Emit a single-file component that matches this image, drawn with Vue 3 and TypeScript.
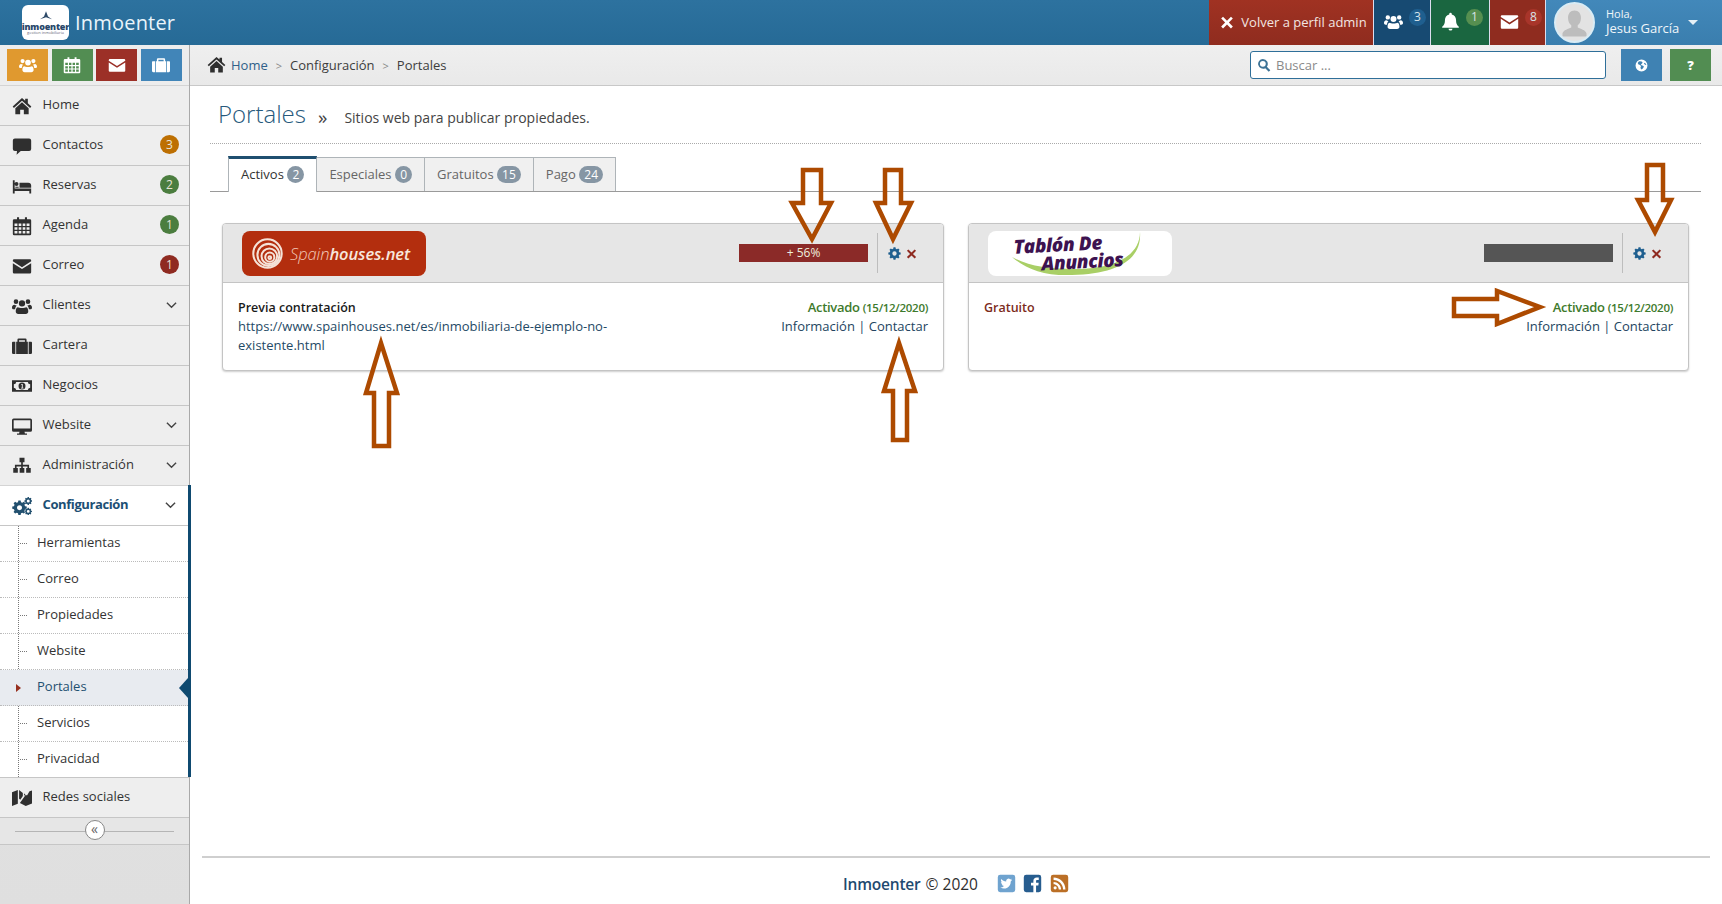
<script setup lang="ts">
function gear(cx: number, cy: number, r: number, teeth: number, hole: number) {
  const pts: string[] = []
  const step = (Math.PI * 2) / teeth
  for (let i = 0; i < teeth; i++) {
    const a = i * step
    const corners: [number, number][] = [
      [a - step * 0.34, r * 0.78],
      [a - step * 0.2, r],
      [a + step * 0.2, r],
      [a + step * 0.34, r * 0.78],
    ]
    for (const [ang, rad] of corners) {
      pts.push((cx + Math.cos(ang) * rad).toFixed(2) + ' ' + (cy + Math.sin(ang) * rad).toFixed(2))
    }
  }
  const ring = `M${cx - hole} ${cy}a${hole} ${hole} 0 1 0 ${hole * 2} 0a${hole} ${hole} 0 1 0 ${-hole * 2} 0z`
  return 'M' + pts.join('L') + 'z' + ring
}

const icons: Record<string, string> = {
  home: 'M12 2.5 0.8 12.6l1.5 1.7L12 5.6l9.7 8.7 1.5-1.7-4.2-3.8V3.4h-3.2v2.3zM12 7.6 4 14.8V22h5.8v-5.6h4.4V22H20v-7.2z',
  comment: 'M3.5 3h17A2.5 2.5 0 0 1 23 5.5v10a2.5 2.5 0 0 1-2.5 2.5H10.5L5.5 22.5 6 18H3.5A2.5 2.5 0 0 1 1 15.5v-10A2.5 2.5 0 0 1 3.500 3z',
  bed: 'M1 5h2.200v10H23v6h-2.200v-3H3.200v3H1zM7.800 9.500a2.400 2.400 0 1 1-4.800 0 2.400 2.400 0 0 1 4.800 0zM9 8h10.500a3.500 3.500 0 0 1 3.500 3.500V14H9zM4 12.800h4V14H4z',
  calendar: 'M6 1.500h2.500V4h7V1.500H18V4h3.500A1.500 1.500 0 0 1 23 5.500V21.500A1.500 1.500 0 0 1 21.500 23h-19A1.500 1.500 0 0 1 1 21.500V5.500A1.500 1.500 0 0 1 2.500 4H6zM3 9v3h3.500V9zM8 9v3h3.200V9zM12.800 9v3H16V9zM17.500 9v3H21V9zM3 13.500V16.500h3.500v-3zM8 13.500V16.500h3.200v-3zM12.800 13.500V16.500H16v-3zM17.500 13.500V16.500H21v-3zM3 18v3h3.500v-3zM8 18v3h3.200v-3zM12.800 18v3H16v-3zM17.500 18v3H21v-3z',
  envelope: 'M2.500 4h19A1.500 1.500 0 0 1 23 5.500v.8L12 13.400 1 6.300v-.8A1.500 1.500 0 0 1 2.500 4zM1 8.600l11 7.100 11-7.100v10.900a1.500 1.500 0 0 1-1.500 1.500h-19A1.500 1.500 0 0 1 1 19.500z',
  users: 'M12 5a3.800 3.800 0 1 1 0 7.600A3.800 3.800 0 0 1 12 5zM4.800 4a2.800 2.800 0 1 1 0 5.600 2.800 2.800 0 0 1 0-5.600zM19.200 4a2.800 2.800 0 1 1 0 5.600 2.800 2.800 0 0 1 0-5.600zM6.800 13.500c1 .6 3 1 5.200 1s4.200-.4 5.200-1c1.600.3 2.300 2.500 2.300 5.200 0 1.700-1.200 2.800-3 2.800H7.500c-1.800 0-3-1.100-3-2.800 0-2.700.7-4.900 2.300-5.200zM3 10.500c.7.5 1.500.8 2.600.9-.9 1-1.600 2.300-1.900 4.600H2c-1 0-2-.6-2-2 0-1.800.8-3.200 3-3.500zM21 10.500c2.200.3 3 1.700 3 3.500 0 1.400-1 2-2 2h-1.700c-.3-2.300-1-3.600-1.900-4.600 1.100-.1 1.900-.4 2.600-.9z',
  briefcase: 'M8 3h8a1.500 1.500 0 0 1 1.500 1.500V7H23a1 1 0 0 1 1 1v12a1.500 1.500 0 0 1-1.500 1.500H20V7h-1V21.500H5V7H4v14.500H1.500A1.500 1.500 0 0 1 0 20V8a1 1 0 0 1 1-1h5.500V4.500A1.500 1.500 0 0 1 8 3zM8.500 5v2h7V5z',
  money: 'M0 5h24v14H0zM5 7.200A3 3 0 0 1 2.200 10v4A3 3 0 0 1 5 16.800h14a3 3 0 0 1 2.800-2.800v-4A3 3 0 0 1 19 7.200zM12 7.800a4.200 4.200 0 1 1 0 8.400 4.200 4.200 0 0 1 0-8.400zM11 9.500v1h.800v3.500h-1v1h3v-1h-.9V9.500z',
  desktop: 'M2 3h20a2 2 0 0 1 2 2v12a2 2 0 0 1-2 2h-7l.5 2H18v1.500H6V21h2.500l.5-2H2a2 2 0 0 1-2-2V5a2 2 0 0 1 2-2zM2 5v10h20V5z',
  sitemap: 'M9 2h6v5.500h-2v3h7.500v4H22.500V20H17v-5.500h1.500V12.500h-5.500v2h1.800V20H9.200v-5.500H11v-2H5.500v2H7V20H1.500v-5.500h2v-4H11v-3H9z',
  map: 'M0 5l7-2.500V19L0 21.500zM8.500 2.500 13 6v3.500l-3 4.500-1.500-1zM24 3v15.500l-7.500 3-7-3.500 7-10 1.500 1 3-5zM14.500 6.500 16 7.500 14.500 9.500z',
  times: 'M5.200 3 12 9.800 18.800 3 22 6.200 15.200 13 22 19.800 18.800 23 12 16.200 5.200 23 2 19.800 8.800 13 2 6.200z',
  bell: 'M12 1a1.600 1.600 0 0 1 1.600 1.600v.6c3.600.8 5.400 3.600 5.400 7 0 4.500 1 6.400 3.500 8.300V20H1.500v-1.500C4 16.600 5 14.700 5 10.200c0-3.400 1.800-6.200 5.400-7v-.6A1.600 1.600 0 0 1 12 1zM9.500 21h5a2.500 2.500 0 0 1-5 0z',
  globe: 'M12 1a11 11 0 1 1 0 22 11 11 0 0 1 0-22zM7 4.500 5 7.500l1.500 2.500 3 1 1.500 2.500-1 3 2 3 2-1.500 2.500-3.500-1.500-2-3-1-1-2 2-1 1-2.500-2-1.500-3-.5zM18 7l-1.500 1.500 2 2 2.500.5c-.4-1.600-1.400-3-3-4z',
  search: 'M10 1.500a8.500 8.500 0 0 1 6.900 13.400l5.900 5.900-2.700 2.700-5.900-5.900A8.500 8.500 0 1 1 10 1.500zM10 5a5 5 0 1 0 0 10 5 5 0 0 0 0-10z',
  twitter: 'M4 1h16a3 3 0 0 1 3 3v16a3 3 0 0 1-3 3H4a3 3 0 0 1-3-3V4a3 3 0 0 1 3-3zM19 7.300c-.6.300-1.200.4-1.700.5.600-.4 1.100-1 1.300-1.700-.6.300-1.200.6-1.900.7a3 3 0 0 0-5.100 2.700c-2.500-.1-4.700-1.300-6.200-3.100-.8 1.400-.4 3.100.9 4-.5 0-1-.1-1.400-.4 0 1.500 1 2.700 2.400 3-.4.100-.9.100-1.300 0 .4 1.200 1.500 2 2.800 2.100A6 6 0 0 1 4.200 17a8.500 8.500 0 0 0 13.100-7.500c.7-.5 1.300-1.100 1.700-2.200z',
  facebook: 'M4 1h16a3 3 0 0 1 3 3v16a3 3 0 0 1-3 3h-3.500v-8.500h2.900l.4-3.300h-3.300V9.100c0-1 .3-1.600 1.600-1.600h1.800v-3c-.4 0-1.400-.1-2.500-.1-2.600 0-4.300 1.600-4.300 4.400v2.400h-3v3.300h3V23H4a3 3 0 0 1-3-3V4a3 3 0 0 1 3-3z',
  rss: 'M4 1h16a3 3 0 0 1 3 3v16a3 3 0 0 1-3 3H4a3 3 0 0 1-3-3V4a3 3 0 0 1 3-3zM4.500 4.500v3c6.600 0 12 5.400 12 12h3c0-8.300-6.700-15-15-15zM4.500 10v3c3.600 0 6.500 2.900 6.500 6.500h3c0-5.200-4.300-9.500-9.500-9.500zM6.500 15.500a2 2 0 1 0 0 4 2 2 0 0 0 0-4z',
  gear: gear(12, 12, 11.5, 8, 4),
  gears: gear(9, 14, 8.8, 8, 3) + gear(19.5, 6, 4.8, 8, 1.8) + gear(19.500, 18.500, 4.5, 8, 1.7),
}

interface NavItem {
  label: string
  icon: string
  badge?: string
  badgeColor?: string
  chevron?: boolean
}

const navTop: NavItem[] = [
  { label: 'Home', icon: 'home' },
  { label: 'Contactos', icon: 'comment', badge: '3', badgeColor: '#bd6f02' },
  { label: 'Reservas', icon: 'bed', badge: '2', badgeColor: '#4b7d3f' },
  { label: 'Agenda', icon: 'calendar', badge: '1', badgeColor: '#4b7d3f' },
  { label: 'Correo', icon: 'envelope', badge: '1', badgeColor: '#8f2b21' },
  { label: 'Clientes', icon: 'users', chevron: true },
  { label: 'Cartera', icon: 'briefcase' },
  { label: 'Negocios', icon: 'money' },
  { label: 'Website', icon: 'desktop', chevron: true },
  { label: 'Administración', icon: 'sitemap', chevron: true },
]

const subItems = ['Herramientas', 'Correo', 'Propiedades', 'Website', 'Portales', 'Servicios', 'Privacidad']

const shortcuts = [
  { icon: 'users', color: '#e0992f' },
  { icon: 'calendar', color: '#528d52' },
  { icon: 'envelope', color: '#9c3027' },
  { icon: 'briefcase', color: '#4185b8' },
]

const tabs = [
  { label: 'Activos', n: '2', active: true },
  { label: 'Especiales', n: '0' },
  { label: 'Gratuitos', n: '15' },
  { label: 'Pago', n: '24' },
]

const alerts = [
  { icon: 'users', n: '3', cls: 'al-blue' },
  { icon: 'bell', n: '1', cls: 'al-green' },
  { icon: 'envelope', n: '8', cls: 'al-red' },
]

// flechas dibujadas sobre la captura
const arrows = [
  '803,170 821,170 821,203 831,203 812,239 792,203 803,203',
  '885,170 901,170 901,203 911,203 893,239 876,203 885,203',
  '374,446 389,446 389,393 397,393 381,343 366,393 374,393',
  '893,440 907,440 907,391 915,391 899,343 884,391 893,391',
  '1647,165 1663,165 1663,200 1671,200 1655,232 1638,200 1647,200',
  '1454,299 1497,299 1497,291 1540,307 1497,324 1497,316 1454,316',
]
</script>

<template>
  <div class="page">
    <header class="topbar">
      <div class="brand">
        <div class="brand-logo">
          <svg class="brand-mark" viewBox="0 0 24 16"><path d="M12 0 15 8l6 4-9-3-9 3 6-4z" /></svg>
          <span class="brand-word">inmoenter</span>
          <span class="brand-tiny">gestion inmobiliaria</span>
        </div>
        <span class="brand-name">Inmoenter</span>
      </div>
      <div class="top-right">
        <div class="back-admin">
          <svg class="ic ic-x" viewBox="0 0 24 24"><path :d="icons.times" /></svg>
          <span>Volver a perfil admin</span>
        </div>
        <div v-for="a in alerts" :key="a.icon" class="alert" :class="a.cls">
          <svg class="ic" viewBox="0 0 24 24"><path :d="icons[a.icon]" /></svg>
          <span class="alert-n">{{ a.n }}</span>
        </div>
        <div class="user">
          <div class="avatar">
            <svg viewBox="0 0 40 40"><path d="M20 7c4.500 0 7 3.400 7 8 0 3.500-1.500 6.500-3.500 8v2.500c3 1.500 8.500 2.500 9.500 6.500v3H7v-3c1-4 6.500-5 9.500-6.500V23c-2-1.500-3.500-4.500-3.500-8 0-4.600 2.500-8 7-8z" /></svg>
          </div>
          <div class="user-name">
            <span class="hola">Hola,</span>
            <span>Jesus García</span>
          </div>
          <span class="caret"></span>
        </div>
      </div>
    </header>

    <div class="layout">
      <aside class="sidebar">
        <div class="shortcuts">
          <div v-for="s in shortcuts" :key="s.icon" class="shortcut" :style="{ background: s.color }">
            <svg class="ic" viewBox="0 0 24 24"><path :d="icons[s.icon]" /></svg>
          </div>
        </div>
        <nav>
          <div v-for="item in navTop" :key="item.label" class="nav-row">
            <svg class="nav-ic" viewBox="0 0 24 24"><path :d="icons[item.icon]" /></svg>
            <span class="nav-label">{{ item.label }}</span>
            <span v-if="item.badge" class="nav-badge" :style="{ background: item.badgeColor }">{{ item.badge }}</span>
            <svg v-if="item.chevron" class="chev" viewBox="0 0 12 8"><path d="M1 1.500 6 6.500 11 1.500" /></svg>
          </div>
          <div class="nav-open">
            <div class="nav-row nav-current">
              <svg class="nav-ic" viewBox="0 0 24 24"><path :d="icons.gears" /></svg>
              <span class="nav-label">Configuración</span>
              <svg class="chev" viewBox="0 0 12 8"><path d="M1 1.500 6 6.500 11 1.500" /></svg>
            </div>
            <ul class="sub">
              <li v-for="s in subItems" :key="s" :class="{ 'sub-active': s === 'Portales' }">{{ s }}</li>
            </ul>
          </div>
          <div class="nav-row">
            <svg class="nav-ic" viewBox="0 0 24 24"><path :d="icons.map" /></svg>
            <span class="nav-label">Redes sociales</span>
          </div>
        </nav>
        <div class="collapse">
          <span class="collapse-btn">«</span>
        </div>
      </aside>

      <main class="main">
        <div class="crumbs">
          <svg class="crumb-home" viewBox="0 0 24 24"><path :d="icons.home" /></svg>
          <span class="crumb-link">Home</span>
          <span class="crumb-sep">&gt;</span>
          <span>Configuración</span>
          <span class="crumb-sep">&gt;</span>
          <span>Portales</span>
          <div class="crumb-tools">
            <div class="search">
              <svg viewBox="0 0 24 24"><path :d="icons.search" /></svg>
              <span>Buscar ...</span>
            </div>
            <div class="tool tool-blue">
              <svg class="ic" viewBox="0 0 24 24"><path :d="icons.globe" /></svg>
            </div>
            <div class="tool tool-green">?</div>
          </div>
        </div>

        <div class="content">
          <div class="title-row">
            <h1>Portales</h1>
            <span class="raquo">»</span>
            <span class="subtitle">Sitios web para publicar propiedades.</span>
          </div>

          <div class="tabs">
            <div v-for="t in tabs" :key="t.label" class="tab" :class="{ 'tab-active': t.active }">
              {{ t.label }}<span class="tab-n">{{ t.n }}</span>
            </div>
          </div>

          <div class="cards">
            <section class="card">
              <div class="card-head">
                <div class="logo logo-sh">
                  <svg viewBox="0 0 36 36" class="sh-mark">
                    <circle cx="18" cy="18" r="15.500" />
                    <circle cx="19" cy="19.500" r="12" />
                    <circle cx="20" cy="21" r="8.500" />
                    <circle cx="20.500" cy="22" r="5" />
                    <circle cx="20.500" cy="22.500" r="1.500" />
                  </svg>
                  <span class="sh-text">Spain<b>houses.net</b></span>
                </div>
                <div class="bar bar-red">+ 56%</div>
                <div class="card-actions">
                  <svg class="act-gear" viewBox="0 0 24 24"><path :d="icons.gear" /></svg>
                  <svg class="act-x" viewBox="0 0 24 24"><path :d="icons.times" /></svg>
                </div>
              </div>
              <div class="card-body">
                <div class="card-left">
                  <strong>Previa contratación</strong>
                  <span class="url">https://www.spainhouses.net/es/inmobiliaria-de-ejemplo-no-existente.html</span>
                </div>
                <div class="card-right">
                  <div class="status">Activado <small>(15/12/2020)</small></div>
                  <div class="links">Información | Contactar</div>
                </div>
              </div>
            </section>

            <section class="card">
              <div class="card-head">
                <div class="logo logo-ta">
                  <svg class="ta-arc" viewBox="0 0 184 45" preserveAspectRatio="none">
                    <path d="M24 26c14 12 32 19 60 18 46-1 70-16 68-43 0 24-26 37-64 37-28 0-48-3-64-12z" />
                  </svg>
                  <span class="ta-text"><span>Tablón De</span><span class="ta-2">Anuncios</span></span>
                </div>
                <div class="bar bar-gray"></div>
                <div class="card-actions">
                  <svg class="act-gear" viewBox="0 0 24 24"><path :d="icons.gear" /></svg>
                  <svg class="act-x" viewBox="0 0 24 24"><path :d="icons.times" /></svg>
                </div>
              </div>
              <div class="card-body">
                <div class="card-left">
                  <span class="free">Gratuito</span>
                </div>
                <div class="card-right">
                  <div class="status">Activado <small>(15/12/2020)</small></div>
                  <div class="links">Información | Contactar</div>
                </div>
              </div>
            </section>
          </div>
        </div>

        <footer class="foot">
          <span class="foot-brand">Inmoenter</span>
          <span class="foot-copy">© 2020</span>
          <div class="foot-icons">
            <svg viewBox="0 0 24 24" style="fill: #6fa3cf"><path :d="icons.twitter" /></svg>
            <svg viewBox="0 0 24 24" style="fill: #275d8f"><path :d="icons.facebook" /></svg>
            <svg viewBox="0 0 24 24" style="fill: #bb6f26"><path :d="icons.rss" /></svg>
          </div>
        </footer>
      </main>
    </div>

    <svg class="marks" viewBox="0 0 1722 904">
      <polygon v-for="(p, i) in arrows" :key="i" :points="p" />
    </svg>
  </div>
</template>

<style>
html, body {
  margin: 0;
  background: #fff;
}
</style>

<style scoped>
.page {
  position: relative;
  width: 1722px;
  height: 904px;
  overflow: hidden;
  display: flex;
  flex-direction: column;
  font-family: "Open Sans", "Liberation Sans", sans-serif;
  font-size: 13px;
  color: #333;
}
svg path {
  fill-rule: evenodd;
}
.ic {
  width: 18px;
  height: 18px;
  fill: #fff;
  display: block;
}

/* header */
.topbar {
  height: 45px;
  flex: none;
  display: flex;
  justify-content: space-between;
  background: linear-gradient(#2d729f, #266a96);
}
.brand {
  display: flex;
  align-items: center;
  padding-left: 22px;
  gap: 6px;
}
.brand-logo {
  width: 47px;
  height: 35px;
  background: #fff;
  border-radius: 6px;
  display: flex;
  flex-direction: column;
  align-items: center;
  justify-content: center;
  overflow: hidden;
}
.brand-mark {
  width: 16px;
  height: 11px;
  fill: #2e4a68;
}
.brand-word {
  font-size: 9px;
  line-height: 9px;
  font-weight: 800;
  color: #29476a;
  letter-spacing: -0.2px;
}
.brand-tiny {
  font-size: 4px;
  line-height: 4px;
  color: #667;
  white-space: nowrap;
}
.brand-name {
  font-size: 20px;
  color: #e9f5fb;
  letter-spacing: 0.2px;
}
.top-right {
  display: flex;
  height: 45px;
}
.back-admin {
  width: 165px;
  background: linear-gradient(#a03222, #8f2c1f);
  color: #f3e6e2;
  display: flex;
  align-items: center;
  justify-content: center;
  gap: 7px;
  font-size: 13px;
  border-right: 1px solid #dde;
  box-sizing: border-box;
  padding: 0 0 2px 5px;
}
.ic-x {
  width: 14px;
  height: 14px;
}
.alert {
  display: flex;
  align-items: flex-start;
  gap: 6px;
  padding: 12px 0 0 10px;
  box-sizing: border-box;
  border-right: 1px solid #dde;
}
.alert .ic {
  width: 19px;
  height: 19px;
}
.alert-n {
  width: 17px;
  height: 17px;
  margin-top: -3px;
  border-radius: 50%;
  font-size: 12px;
  line-height: 16px;
  text-align: center;
  color: #d8e4ea;
}
.al-blue {
  width: 57px;
  background: #174a72;
}
.al-blue .alert-n {
  background: #1f5f8f;
}
.al-green {
  width: 59px;
  background: #1a6640;
}
.al-green .alert-n {
  background: #568f50;
}
.al-red {
  width: 56px;
  background: #8f2c1f;
}
.al-red .alert-n {
  background: #a8352a;
}
.user {
  width: 176px;
  display: flex;
  align-items: center;
  background: linear-gradient(#4288ba, #3a7eae);
  padding-left: 8px;
  box-sizing: border-box;
  color: #f0f6fa;
}
.avatar {
  width: 37px;
  height: 37px;
  border-radius: 50%;
  border: 2px solid #d9ecf5;
  background: #e3e3e3;
  overflow: hidden;
  flex: none;
}
.avatar svg {
  width: 100%;
  height: 100%;
  display: block;
  fill: #bdbdbd;
}
.user-name {
  display: flex;
  flex-direction: column;
  margin: -2px 0 0 11px;
  font-size: 13px;
  line-height: 15px;
}
.hola {
  font-size: 11px;
  line-height: 14px;
}
.caret {
  margin-left: 9px;
  border-left: 5px solid transparent;
  border-right: 5px solid transparent;
  border-top: 5px solid #e6f0f6;
}

.layout {
  flex: 1;
  display: flex;
  min-height: 0;
}

/* sidebar */
.sidebar {
  width: 190px;
  flex: none;
  box-sizing: border-box;
  border-right: 1px solid #a9a9a9;
  background: linear-gradient(#e9e9e9, #dfdfdf);
  display: flex;
  flex-direction: column;
}
.shortcuts {
  height: 40px;
  flex: none;
  box-sizing: border-box;
  padding: 4px 0 0 7px;
  display: flex;
  gap: 3.500px;
  background: #ededed;
}
.shortcut {
  width: 41px;
  height: 32px;
  display: flex;
  align-items: center;
  justify-content: center;
}
.nav-row {
  height: 40px;
  box-sizing: border-box;
  border-top: 1px solid #c6c6c6;
  background: #eeeeee;
  display: flex;
  align-items: center;
  padding: 0 0 3px 12px;
  position: relative;
}
.nav-row:first-child {
  border-top: 1px solid #d4d4d4;
}
.nav-ic {
  width: 20px;
  height: 20px;
  fill: #2f2f2f;
  flex: none;
  margin-top: 3px;
}
.nav-label {
  margin-left: 10.500px;
  color: #333;
}
.nav-badge {
  position: absolute;
  right: 10px;
  top: 9px;
  width: 19px;
  height: 19px;
  border-radius: 50%;
  color: #e8e4d8;
  font-size: 12px;
  line-height: 19px;
  text-align: center;
}
.chev {
  position: absolute;
  right: 12px;
  top: 15px;
  width: 11px;
  height: 8px;
}
.chev path {
  fill: none;
  stroke: #444;
  stroke-width: 1.500;
}
.nav-open {
  border-right: 3px solid #0f4a70;
  margin-right: -2px;
  background: #fff;
}
.nav-current {
  background: #fff;
}
.nav-current .nav-ic {
  fill: #22506f;
}
.nav-current .nav-label {
  color: #1d4f74;
  font-weight: 700;
  letter-spacing: -0.4px;
}
.sub {
  list-style: none;
  margin: 0;
  padding: 0;
  border-top: 1px solid #c6c6c6;
  position: relative;
}
.sub::before {
  content: "";
  position: absolute;
  left: 18px;
  top: 0;
  bottom: 0;
  border-left: 1px dotted #777;
}
.sub li {
  height: 36px;
  box-sizing: border-box;
  border-bottom: 1px dotted #bbb;
  line-height: 33px;
  padding-left: 37px;
  color: #333;
  position: relative;
}
.sub li:last-child {
  height: 35px;
  border-bottom: none;
}
.sub li::before {
  content: "";
  position: absolute;
  left: 20px;
  top: 17px;
  width: 7px;
  border-top: 1px dotted #777;
}
.sub-active {
  background: #e8ebf0;
  color: #1f5070 !important;
}
.sub-active::before {
  border-top: 4px solid transparent !important;
  border-bottom: 4px solid transparent;
  border-left: 5px solid #96301f;
  width: 0 !important;
  left: 16px !important;
  top: 14px !important;
}
.sub-active::after {
  content: "";
  position: absolute;
  right: 0;
  top: 8px;
  border-top: 10px solid transparent;
  border-bottom: 10px solid transparent;
  border-right: 9px solid #0f4a70;
}
.collapse {
  height: 28px;
  flex: none;
  box-sizing: border-box;
  border-top: 1px solid #c6c6c6;
  border-bottom: 1px solid #c6c6c6;
  background: #e6e6e6;
  position: relative;
  display: flex;
  align-items: center;
  justify-content: center;
  padding-bottom: 2px;
}
.collapse::before {
  content: "";
  position: absolute;
  left: 15px;
  right: 15px;
  top: 13px;
  border-top: 1px solid #b5b5b5;
}
.collapse-btn {
  position: relative;
  width: 18px;
  height: 18px;
  border-radius: 50%;
  border: 1px solid #888;
  background: #fff;
  text-align: center;
  font-size: 14px;
  line-height: 15px;
  color: #666;
}

/* main */
.main {
  flex: 1;
  display: flex;
  flex-direction: column;
  min-width: 0;
}
.crumbs {
  height: 41px;
  flex: none;
  box-sizing: border-box;
  display: flex;
  align-items: center;
  background: linear-gradient(#efefef, #e9e9e9);
  border-bottom: 1px solid #c8c8c8;
  padding-left: 17px;
  color: #3d3d3d;
}
.crumb-home {
  width: 19px;
  height: 19px;
  fill: #2f2f2f;
  margin-right: 5px;
  margin-top: -2px;
}
.crumb-link {
  color: #2f6089;
}
.crumb-sep {
  margin: 0 8px;
  color: #888;
  font-size: 11px;
}
.crumb-tools {
  margin-left: auto;
  display: flex;
  align-items: center;
}
.search {
  width: 356px;
  height: 28px;
  box-sizing: border-box;
  background: #fff;
  border: 1px solid #2f6f99;
  border-radius: 3px;
  display: flex;
  align-items: center;
  gap: 5px;
  padding-left: 6px;
  color: #8a8a8a;
  margin-right: 15px;
}
.search svg {
  width: 14px;
  height: 14px;
  fill: #3d7396;
}
.tool {
  width: 41px;
  height: 32px;
  display: flex;
  align-items: center;
  justify-content: center;
}
.tool .ic {
  width: 13px;
  height: 13px;
}
.tool-blue {
  background: #3f82b3;
  margin-right: 8px;
}
.tool-green {
  background: #528d52;
  margin-right: 11px;
  color: #fff;
  font-weight: 800;
  font-size: 13px;
}
.content {
  flex: 1;
  padding: 0 21px 0 20px;
  min-height: 0;
}
.title-row {
  height: 58px;
  box-sizing: border-box;
  border-bottom: 1px dotted #aaa;
  display: flex;
  align-items: center;
  padding: 0 0 2px 8px;
}
h1 {
  margin: 0;
  font-size: 24px;
  font-weight: 300;
  color: #27597c;
}
.raquo {
  margin: 7px 0 0 12px;
  font-size: 19px;
  line-height: 22px;
  color: #444;
}
.subtitle {
  margin: 8px 0 0 17px;
  font-size: 14px;
  color: #444;
}
.tabs {
  margin-top: 12px;
  height: 36px;
  box-sizing: border-box;
  padding-left: 18px;
  border-bottom: 1px solid #9a9a9a;
  display: flex;
  align-items: flex-end;
}
.tab {
  height: 34px;
  box-sizing: border-box;
  border: 1px solid #aeb4b8;
  border-left: none;
  border-bottom: none;
  background: #f0f0f0;
  padding: 0 12px;
  color: #666;
  line-height: 33px;
  white-space: nowrap;
}
.tab-active {
  height: 36px;
  margin-bottom: -1px;
  background: #fff;
  border-left: 1px solid #aeb4b8;
  border-top: 3px solid #1f4f70;
  color: #333;
  line-height: 30px;
}
.tab-n {
  display: inline-block;
  min-width: 17px;
  height: 17px;
  margin-left: 3.500px;
  padding: 0 5px;
  box-sizing: border-box;
  border-radius: 9px;
  background: #8696a4;
  color: #fff;
  font-size: 12px;
  line-height: 17px;
  text-align: center;
  vertical-align: 0;
}
.cards {
  margin: 31px 13px 0 12px;
  display: grid;
  grid-template-columns: 722px 721px;
  gap: 24px;
}
.card {
  height: 148px;
  box-sizing: border-box;
  border: 1px solid #c4c4c4;
  border-radius: 4px;
  box-shadow: 0 1px 2px rgba(0, 0, 0, 0.2);
  background: #fff;
  display: flex;
  flex-direction: column;
}
.card-head {
  height: 59px;
  flex: none;
  box-sizing: border-box;
  background: #e6e6e6;
  border-bottom: 1px solid #c4c4c4;
  border-radius: 3px 3px 0 0;
  display: flex;
  align-items: center;
  padding: 0 26px 0 19px;
}
.logo {
  width: 184px;
  height: 45px;
  border-radius: 8px;
  flex: none;
  position: relative;
  display: flex;
  align-items: center;
}
.logo-sh {
  background: #b32e0e;
  color: #f2c9b8;
  padding-left: 9px;
  box-sizing: border-box;
}
.sh-mark {
  width: 33px;
  height: 33px;
  flex: none;
}
.sh-mark circle {
  fill: none;
  stroke: #f5e3d8;
  stroke-width: 2.200;
}
.sh-text {
  margin-left: 6px;
  font-size: 16.500px;
  font-style: italic;
  font-weight: 300;
  white-space: nowrap;
  letter-spacing: -0.1px;
}
.sh-text b {
  color: #f7e7dc;
  font-weight: 600;
}
.logo-ta {
  background: #fff;
}
.ta-arc {
  position: absolute;
  left: 0;
  top: 0;
  width: 100%;
  height: 100%;
  fill: #a9cf66;
}
.ta-text {
  position: relative;
  display: flex;
  flex-direction: column;
  margin: -1px 0 0 26px;
  color: #3d1250;
  font-size: 19px;
  line-height: 18px;
  font-weight: 800;
  font-style: italic;
  letter-spacing: -0.4px;
  white-space: nowrap;
  transform: rotate(-3deg);
}
.ta-2 {
  margin-left: 27px;
}
.bar {
  width: 129px;
  height: 18px;
  margin-left: auto;
  text-align: center;
  line-height: 18px;
  font-size: 12px;
  color: #eed;
  flex: none;
}
.bar-red {
  background: #8b2a28;
}
.bar-gray {
  background: #555;
}
.card-actions {
  height: 40px;
  margin-left: 9px;
  border-left: 1px solid #bdbdbd;
  padding-left: 10px;
  display: flex;
  align-items: center;
  gap: 4px;
  flex: none;
}
.act-gear {
  width: 13px;
  height: 13px;
  fill: #1f5f8f;
}
.act-x {
  width: 11px;
  height: 11px;
  fill: #8f2b21;
  margin-left: 1px;
}
.card-body {
  flex: 1;
  display: flex;
  justify-content: space-between;
  padding: 15px 15px 0 15px;
  line-height: 19px;
}
.card-left {
  width: 385px;
  display: flex;
  flex-direction: column;
}
.card-left strong {
  font-size: 12.500px;
  font-weight: 600;
  color: #1a1a1a;
}
.url {
  color: #1f4a66;
}
.free {
  color: #7c2b1c;
  font-weight: 600;
  font-size: 12.500px;
}
.card-right {
  text-align: right;
}
.status {
  color: #3e7a2c;
  font-weight: 600;
  letter-spacing: -0.3px;
}
.status small {
  font-size: 11.500px;
}
.links {
  color: #23455f;
}

/* footer */
.foot {
  height: 48px;
  flex: none;
  margin: 0 12px 0 12px;
  border-top: 2px solid #cfcfcf;
  box-sizing: border-box;
  display: flex;
  align-items: center;
  justify-content: center;
  font-size: 15.500px;
  padding-top: 5px;
}
.foot-brand {
  font-weight: 600;
  color: #1f4a70;
  letter-spacing: -0.2px;
}
.foot-copy {
  margin-left: 5px;
  color: #2e2e2e;
}
.foot-icons {
  display: flex;
  gap: 7.500px;
  margin-left: 19px;
}
.foot-icons svg {
  width: 19px;
  height: 19px;
}

/* flechas */
.marks {
  position: absolute;
  left: 0;
  top: 0;
  width: 1722px;
  height: 904px;
  pointer-events: none;
}
.marks polygon {
  fill: none;
  stroke: #ad4a00;
  stroke-width: 4.500;
}
</style>
